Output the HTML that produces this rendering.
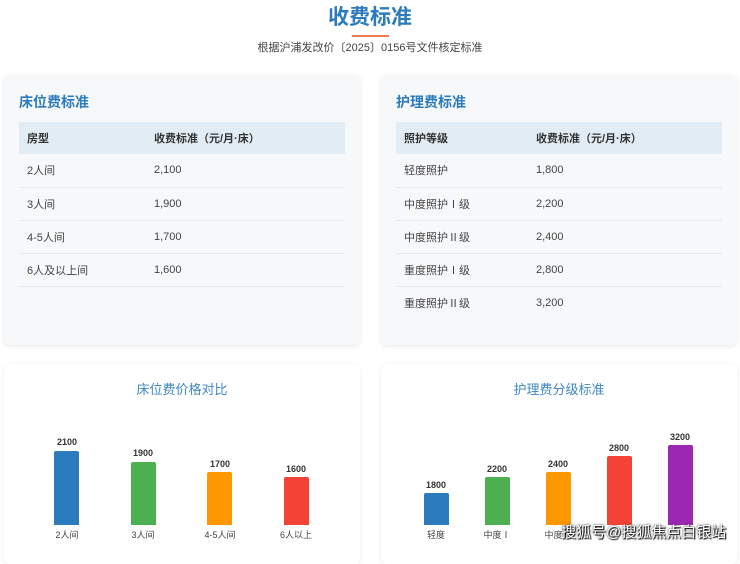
<!DOCTYPE html>
<html><head><meta charset="utf-8"><style>
*{margin:0;padding:0;box-sizing:border-box}
body{width:740px;height:547px;overflow:hidden;background:#fff;font-family:"Liberation Sans","Noto Sans CJK SC",sans-serif;position:relative;color:#333}
.a{position:absolute}
h1{position:absolute;left:0;width:740px;top:1px;text-align:center;font-size:21px;color:#2b7bbd;font-weight:bold}
.line{left:352px;top:35px;width:37px;height:2px;background:#f07a4a}
.sub{left:0;width:740px;top:39px;text-align:center;font-size:11px;color:#444}
.card{position:absolute;background:#f6f8fa;border-radius:6px;box-shadow:0 1px 5px rgba(0,0,0,.1)}
.card2{position:absolute;background:#fff;border-radius:6px;box-shadow:0 1px 5px rgba(0,0,0,.08)}
.ct{position:absolute;font-size:14px;font-weight:bold;color:#2b7bbd}
table{position:absolute;border-collapse:collapse;font-size:11px;color:#444}
th{background:#e1ecf4;height:32px;text-align:left;padding-left:8px;font-weight:bold;color:#333}
td{height:33px;padding-left:8px;border-bottom:1px solid #e5e8eb}
tr:last-child td{border-bottom:none}
.chartt{position:absolute;font-size:13px;color:#3f87c5;text-align:center}
.bar{position:absolute;border-radius:2px 2px 0 0;width:25px}
.v{position:absolute;font-size:9px;font-weight:bold;color:#333;width:40px;text-align:center}
.l{position:absolute;font-size:9px;color:#444;width:60px;text-align:center;top:528px}
</style></head><body>
<h1>收费标准</h1>
<div class="a line"></div>
<div class="a sub">根据沪浦发改价〔2025〕0156号文件核定标准</div>

<div class="card" style="left:4px;top:75px;width:356px;height:270px"></div>
<div class="ct" style="left:19px;top:92px">床位费标准</div>
<table style="left:19px;top:122px;width:326px">
<tr><th style="width:127px">房型</th><th>收费标准（元/月·床）</th></tr>
<tr><td>2人间</td><td>2,100</td></tr>
<tr><td>3人间</td><td>1,900</td></tr>
<tr><td>4-5人间</td><td>1,700</td></tr>
<tr><td style="border-bottom:1px solid #e5e8eb">6人及以上间</td><td style="border-bottom:1px solid #e5e8eb">1,600</td></tr>
</table>

<div class="card" style="left:381px;top:75px;width:356px;height:270px"></div>
<div class="ct" style="left:396px;top:92px">护理费标准</div>
<table style="left:396px;top:122px;width:326px">
<tr><th style="width:132px">照护等级</th><th>收费标准（元/月·床）</th></tr>
<tr><td>轻度照护</td><td>1,800</td></tr>
<tr><td>中度照护Ⅰ级</td><td>2,200</td></tr>
<tr><td>中度照护Ⅱ级</td><td>2,400</td></tr>
<tr><td>重度照护Ⅰ级</td><td>2,800</td></tr>
<tr><td>重度照护Ⅱ级</td><td>3,200</td></tr>
</table>

<div class="card2" style="left:4px;top:364px;width:356px;height:200px"></div>
<div class="chartt" style="left:4px;width:356px;top:379px">床位费价格对比</div>
<div class="bar" style="left:54px;top:451px;height:74px;background:#2b7bbd"></div>
<div class="v" style="left:47px;top:437px">2100</div>
<div class="l" style="left:37px">2人间</div>
<div class="bar" style="left:131px;top:462px;height:63px;background:#4caf50"></div>
<div class="v" style="left:123px;top:448px">1900</div>
<div class="l" style="left:113px">3人间</div>
<div class="bar" style="left:207px;top:472px;height:53px;background:#ff9800"></div>
<div class="v" style="left:200px;top:459px">1700</div>
<div class="l" style="left:190px">4-5人间</div>
<div class="bar" style="left:284px;top:477px;height:48px;background:#f44336"></div>
<div class="v" style="left:276px;top:464px">1600</div>
<div class="l" style="left:266px">6人以上</div>

<div class="card2" style="left:381px;top:364px;width:356px;height:200px"></div>
<div class="chartt" style="left:381px;width:356px;top:379px">护理费分级标准</div>
<div class="bar" style="left:424px;top:493px;height:32px;background:#2b7bbd"></div>
<div class="v" style="left:416px;top:480px">1800</div>
<div class="l" style="left:406px">轻度</div>
<div class="bar" style="left:485px;top:477px;height:48px;background:#4caf50"></div>
<div class="v" style="left:477px;top:464px">2200</div>
<div class="l" style="left:467px">中度Ⅰ</div>
<div class="bar" style="left:546px;top:472px;height:53px;background:#ff9800"></div>
<div class="v" style="left:538px;top:459px">2400</div>
<div class="l" style="left:528px">中度Ⅱ</div>
<div class="bar" style="left:607px;top:456px;height:69px;background:#f44336"></div>
<div class="v" style="left:599px;top:443px">2800</div>
<div class="bar" style="left:668px;top:445px;height:80px;background:#9c27b0"></div>
<div class="v" style="left:660px;top:432px">3200</div>
<div class="a" style="left:561px;top:521px;font-size:15px;color:#fff;text-shadow:0 0 2px #000,1px 1px 1px #000">搜狐号@搜狐焦点白银站</div>
</body></html>
